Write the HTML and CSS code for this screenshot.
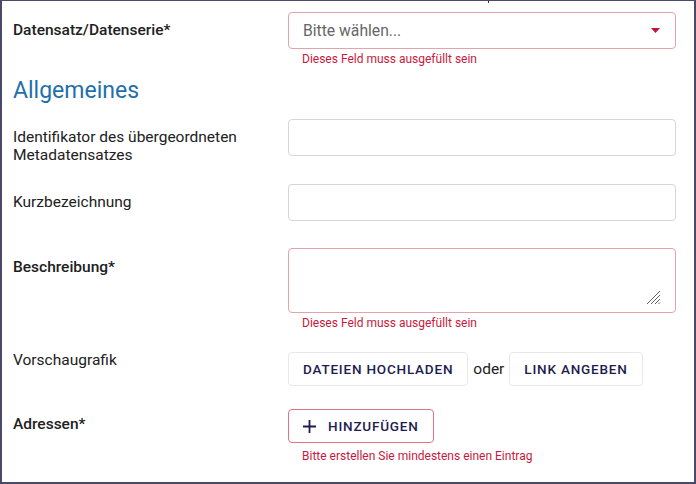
FILE: index.html
```html
<!DOCTYPE html>
<html lang="de">
<head>
<meta charset="utf-8">
<title>Formular</title>
<link rel="stylesheet" href="styles.css">
</head>
<body>
<div class="frame">
  <span class="tick"></span>

  <div class="row row-1">
    <label class="label strong">Datensatz/Datenserie*</label>
    <div class="field">
      <div class="select invalid">
        <span class="placeholder">Bitte wählen...</span>
        <svg class="caret" width="9" height="5" viewBox="0 0 9 5"><path d="M0 0h9L4.5 5z" fill="#c2123b"/></svg>
      </div>
      <div class="error">Dieses Feld muss ausgefüllt sein</div>
    </div>
  </div>

  <h2 class="section-title">Allgemeines</h2>

  <div class="row row-2">
    <label class="label">Identifikator des übergeordneten Metadatensatzes</label>
    <div class="field"><input class="input" type="text"></div>
  </div>

  <div class="row row-3">
    <label class="label">Kurzbezeichnung</label>
    <div class="field"><input class="input" type="text"></div>
  </div>

  <div class="row row-4">
    <label class="label strong">Beschreibung*</label>
    <div class="field">
      <div class="textarea-wrap">
        <textarea class="textarea invalid"></textarea>
        <svg class="resizer" width="16" height="16" viewBox="0 0 16 16">
          <path d="M15 2L2 15M15 6L6 15M15 10L10 15M15 13.5L13.5 15" stroke="#5f5f5f" stroke-width="1" fill="none"/>
        </svg>
      </div>
      <div class="error">Dieses Feld muss ausgefüllt sein</div>
    </div>
  </div>

  <div class="row row-5">
    <label class="label">Vorschaugrafik</label>
    <div class="field">
      <div class="btn-line">
        <button class="btn" type="button">Dateien hochladen</button>
        <span class="or">oder</span>
        <button class="btn" type="button">Link angeben</button>
      </div>
    </div>
  </div>

  <div class="row row-6">
    <label class="label strong">Adressen*</label>
    <div class="field">
      <button class="btn btn-add" type="button">
        <svg class="plus" width="13" height="13" viewBox="0 0 13 13"><path d="M6.5 0v13M0 6.5h13" stroke="#1e1c4f" stroke-width="1.8" fill="none"/></svg>
        Hinzufügen
      </button>
      <div class="error error-add">Bitte erstellen Sie mindestens einen Eintrag</div>
    </div>
  </div>
</div>
</body>
</html>
```

FILE: styles.css
```css
* { box-sizing: border-box; }

html, body {
  margin: 0;
  padding: 0;
  background: #ffffff;
}

body {
  font-family: Roboto, "Noto Sans", "Liberation Sans", sans-serif;
  color: #212121;
}

.frame {
  position: relative;
  width: 696px;
  height: 484px;
  border-style: solid;
  border-color: #4a4969;
  border-width: 1px 2px 2px 2px;
  padding: 11px 18px 0 11px;
  overflow: hidden;
}

.tick {
  position: absolute;
  top: -1px;
  left: 486px;
  width: 1px;
  height: 3px;
  background: #2a2a3a;
}

.row {
  display: grid;
  grid-template-columns: 275px 388px;
  align-items: start;
}

.label {
  font-size: 15.5px;
  line-height: 18px;
  padding-top: 9px;
  padding-right: 20px;
  color: #212121;
}

.strong { font-weight: 500; }

.row-2 { margin-bottom: 20px; }
.row-3 { margin-bottom: 27px; }
.row-4 { margin-bottom: 20px; }
.row-4 .label { padding-top: 10px; }
.row-5 { margin-bottom: 23px; }
.row-5 .label { padding-top: 0; }
.row-5 .field { padding-top: 1px; }
.row-6 .label { padding-top: 6px; }

.section-title {
  margin: 10px 0 14px;
  font-size: 23px;
  line-height: 28px;
  font-weight: 400;
  color: #1f6fab;
}

.input {
  display: block;
  width: 100%;
  height: 37px;
  margin: 0;
  border: 1px solid #d6d6d6;
  border-radius: 4px;
  background: #fff;
  font: inherit;
  outline: none;
}

.select {
  height: 37px;
  border: 1px solid #e3a3ad;
  border-radius: 4px;
  display: flex;
  align-items: center;
  justify-content: space-between;
  padding: 0 15px 0 14px;
}

.placeholder {
  font-size: 15.7px;
  color: #666666;
}

.caret { display: block; }

.textarea-wrap {
  position: relative;
  height: 65px;
}

.textarea {
  display: block;
  width: 100%;
  height: 65px;
  margin: 0;
  border: 1px solid #e3a3ad;
  border-radius: 4px;
  resize: none;
  font: inherit;
  outline: none;
}

.resizer {
  position: absolute;
  right: 15px;
  bottom: 8px;
}

.error {
  margin-top: 2px;
  padding-left: 14px;
  font-size: 12px;
  line-height: 16px;
  color: #c8193c;
}

.error-add { margin-top: 5px; }

.btn-line {
  display: flex;
  align-items: center;
}

.btn {
  display: inline-flex;
  align-items: center;
  height: 34px;
  margin: 0;
  padding: 0 14px;
  border: 1px solid #e8e8e8;
  border-radius: 4px;
  background: #ffffff;
  font-family: Roboto, "Noto Sans", "Liberation Sans", sans-serif;
  font-size: 13.5px;
  font-weight: 500;
  letter-spacing: 0.8px;
  text-transform: uppercase;
  color: #1e1c4f;
}

.or {
  margin: 0 5px;
  font-size: 15.5px;
  color: #212121;
}

.btn-add {
  border-color: #dc7486;
  gap: 12px;
}

.plus { display: block; }
```
